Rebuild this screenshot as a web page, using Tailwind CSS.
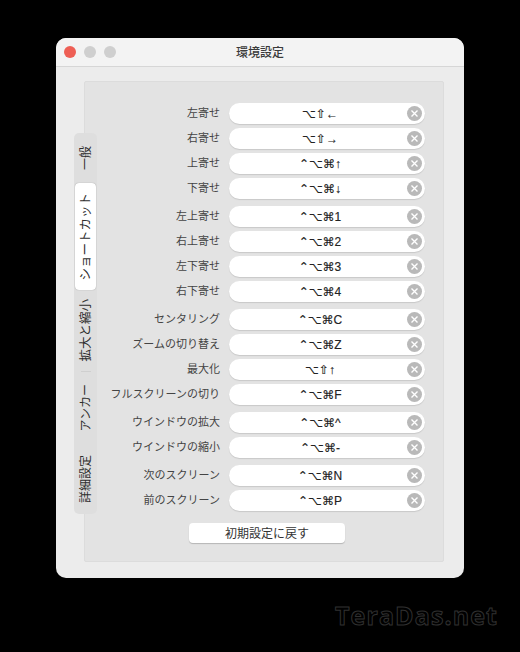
<!DOCTYPE html>
<html lang="ja">
  <head>
    <meta charset="utf-8" />
    <meta content="width=device-width, initial-scale=1.0" name="viewport" />
    <title>環境設定</title>
    <script src="https://cdn.jsdelivr.net/npm/@tailwindcss/browser@4"></script>
  </head>
  <body class="bg-black">
    <div class="relative w-[520px] h-[652px] overflow-hidden bg-black pt-[38px] pl-[56px] font-['Noto_Sans_CJK_JP','DejaVu_Sans',sans-serif]">
      <!-- window -->
      <div class="w-[408px] h-[540px] rounded-[10px] bg-[#ececec] overflow-hidden flex flex-col">
        <!-- title bar -->
        <div class="relative h-[29px] shrink-0 bg-[#f3f3f3] border-b border-[#d6d6d6] flex items-center justify-center">
          <div class="absolute left-[8px] top-[8px] flex gap-[8px]">
            <span class="w-[12px] h-[12px] rounded-full bg-[#ee5f55]"></span>
            <span class="w-[12px] h-[12px] rounded-full bg-[#cfcfcf]"></span>
            <span class="w-[12px] h-[12px] rounded-full bg-[#cfcfcf]"></span>
          </div>
          <span class="text-[12px] font-medium leading-none text-[#3a3a3a]">環境設定</span>
        </div>

        <!-- tab panel -->
        <div class="relative ml-[28px] mt-[14px] w-[360px] h-[481px] bg-[#e3e3e3] border border-[#dcdcdc] rounded-[2px] pt-[21px]">
          <!-- vertical tabs -->
          <div class="absolute left-[-11px] top-[51px] w-[23px] h-[381px] rounded-[5px] bg-[#dedede] flex flex-col items-center text-[12px] leading-none text-[#2e2e2e]">
            <div class="h-[50px] pr-px flex items-center justify-center"><span class="[writing-mode:vertical-rl] [text-orientation:sideways] rotate-180">一般</span></div>
            <div class="h-[107px] w-[21px] bg-white rounded-[4px] shadow-[0_0_1px_#00000066] flex items-center justify-center"><span class="[writing-mode:vertical-rl] [text-orientation:sideways] rotate-180 text-[12.5px]">ショートカット</span></div>
            <div class="h-[81px] pr-px flex items-center justify-center"><span class="[writing-mode:vertical-rl] [text-orientation:sideways] rotate-180 text-[12.5px]">拡大と縮小</span></div>
            <div class="w-[10px] h-px bg-[#cfcfcf]"></div>
            <div class="h-[72px] pr-px flex items-center justify-center"><span class="[writing-mode:vertical-rl] [text-orientation:sideways] rotate-180">アンカー</span></div>
            <div class="flex-1 pr-px flex items-center justify-center"><span class="[writing-mode:vertical-rl] [text-orientation:sideways] rotate-180">詳細設定</span></div>
          </div>

          <!-- shortcut rows -->
          <div class="flex flex-col gap-[7px] pl-[20px]">
            <div class="flex flex-col gap-[4px]">
              <div class="flex items-center gap-[9px] h-[21px]"><span class="w-[115px] pb-[2px] text-right text-[11px] leading-none text-[#444]">左寄せ</span><div class="relative w-[196px] h-[21px] pr-[14px] rounded-full bg-white shadow-[0_1px_1px_#0000001f] flex items-center justify-center font-['Liberation_Sans','DejaVu_Sans',sans-serif] text-[12px] leading-none text-[#222] [-webkit-text-stroke:0.15px_#222]">⌥⇧←<span class="absolute right-[3px] top-[3px] w-[15px] h-[15px] rounded-full bg-[#b9b9b9] flex items-center justify-center"><svg width="9" height="9" viewBox="0 0 9 9"><path d="M1.5 1.5l6 6M7.5 1.5l-6 6" stroke="#fff" stroke-width="1.4"/></svg></span></div></div>
              <div class="flex items-center gap-[9px] h-[21px]"><span class="w-[115px] pb-[2px] text-right text-[11px] leading-none text-[#444]">右寄せ</span><div class="relative w-[196px] h-[21px] pr-[14px] rounded-full bg-white shadow-[0_1px_1px_#0000001f] flex items-center justify-center font-['Liberation_Sans','DejaVu_Sans',sans-serif] text-[12px] leading-none text-[#222] [-webkit-text-stroke:0.15px_#222]">⌥⇧→<span class="absolute right-[3px] top-[3px] w-[15px] h-[15px] rounded-full bg-[#b9b9b9] flex items-center justify-center"><svg width="9" height="9" viewBox="0 0 9 9"><path d="M1.5 1.5l6 6M7.5 1.5l-6 6" stroke="#fff" stroke-width="1.4"/></svg></span></div></div>
              <div class="flex items-center gap-[9px] h-[21px]"><span class="w-[115px] pb-[2px] text-right text-[11px] leading-none text-[#444]">上寄せ</span><div class="relative w-[196px] h-[21px] pr-[14px] rounded-full bg-white shadow-[0_1px_1px_#0000001f] flex items-center justify-center font-['Liberation_Sans','DejaVu_Sans',sans-serif] text-[12px] leading-none text-[#222] [-webkit-text-stroke:0.15px_#222]">⌃⌥⌘↑<span class="absolute right-[3px] top-[3px] w-[15px] h-[15px] rounded-full bg-[#b9b9b9] flex items-center justify-center"><svg width="9" height="9" viewBox="0 0 9 9"><path d="M1.5 1.5l6 6M7.5 1.5l-6 6" stroke="#fff" stroke-width="1.4"/></svg></span></div></div>
              <div class="flex items-center gap-[9px] h-[21px]"><span class="w-[115px] pb-[2px] text-right text-[11px] leading-none text-[#444]">下寄せ</span><div class="relative w-[196px] h-[21px] pr-[14px] rounded-full bg-white shadow-[0_1px_1px_#0000001f] flex items-center justify-center font-['Liberation_Sans','DejaVu_Sans',sans-serif] text-[12px] leading-none text-[#222] [-webkit-text-stroke:0.15px_#222]">⌃⌥⌘↓<span class="absolute right-[3px] top-[3px] w-[15px] h-[15px] rounded-full bg-[#b9b9b9] flex items-center justify-center"><svg width="9" height="9" viewBox="0 0 9 9"><path d="M1.5 1.5l6 6M7.5 1.5l-6 6" stroke="#fff" stroke-width="1.4"/></svg></span></div></div>
            </div>
            <div class="flex flex-col gap-[4px]">
              <div class="flex items-center gap-[9px] h-[21px]"><span class="w-[115px] pb-[2px] text-right text-[11px] leading-none text-[#444]">左上寄せ</span><div class="relative w-[196px] h-[21px] pr-[14px] rounded-full bg-white shadow-[0_1px_1px_#0000001f] flex items-center justify-center font-['Liberation_Sans','DejaVu_Sans',sans-serif] text-[12px] leading-none text-[#222] [-webkit-text-stroke:0.15px_#222]">⌃⌥⌘1<span class="absolute right-[3px] top-[3px] w-[15px] h-[15px] rounded-full bg-[#b9b9b9] flex items-center justify-center"><svg width="9" height="9" viewBox="0 0 9 9"><path d="M1.5 1.5l6 6M7.5 1.5l-6 6" stroke="#fff" stroke-width="1.4"/></svg></span></div></div>
              <div class="flex items-center gap-[9px] h-[21px]"><span class="w-[115px] pb-[2px] text-right text-[11px] leading-none text-[#444]">右上寄せ</span><div class="relative w-[196px] h-[21px] pr-[14px] rounded-full bg-white shadow-[0_1px_1px_#0000001f] flex items-center justify-center font-['Liberation_Sans','DejaVu_Sans',sans-serif] text-[12px] leading-none text-[#222] [-webkit-text-stroke:0.15px_#222]">⌃⌥⌘2<span class="absolute right-[3px] top-[3px] w-[15px] h-[15px] rounded-full bg-[#b9b9b9] flex items-center justify-center"><svg width="9" height="9" viewBox="0 0 9 9"><path d="M1.5 1.5l6 6M7.5 1.5l-6 6" stroke="#fff" stroke-width="1.4"/></svg></span></div></div>
              <div class="flex items-center gap-[9px] h-[21px]"><span class="w-[115px] pb-[2px] text-right text-[11px] leading-none text-[#444]">左下寄せ</span><div class="relative w-[196px] h-[21px] pr-[14px] rounded-full bg-white shadow-[0_1px_1px_#0000001f] flex items-center justify-center font-['Liberation_Sans','DejaVu_Sans',sans-serif] text-[12px] leading-none text-[#222] [-webkit-text-stroke:0.15px_#222]">⌃⌥⌘3<span class="absolute right-[3px] top-[3px] w-[15px] h-[15px] rounded-full bg-[#b9b9b9] flex items-center justify-center"><svg width="9" height="9" viewBox="0 0 9 9"><path d="M1.5 1.5l6 6M7.5 1.5l-6 6" stroke="#fff" stroke-width="1.4"/></svg></span></div></div>
              <div class="flex items-center gap-[9px] h-[21px]"><span class="w-[115px] pb-[2px] text-right text-[11px] leading-none text-[#444]">右下寄せ</span><div class="relative w-[196px] h-[21px] pr-[14px] rounded-full bg-white shadow-[0_1px_1px_#0000001f] flex items-center justify-center font-['Liberation_Sans','DejaVu_Sans',sans-serif] text-[12px] leading-none text-[#222] [-webkit-text-stroke:0.15px_#222]">⌃⌥⌘4<span class="absolute right-[3px] top-[3px] w-[15px] h-[15px] rounded-full bg-[#b9b9b9] flex items-center justify-center"><svg width="9" height="9" viewBox="0 0 9 9"><path d="M1.5 1.5l6 6M7.5 1.5l-6 6" stroke="#fff" stroke-width="1.4"/></svg></span></div></div>
            </div>
            <div class="flex flex-col gap-[4px]">
              <div class="flex items-center gap-[9px] h-[21px]"><span class="w-[115px] pb-[2px] text-right text-[11px] leading-none text-[#444]">センタリング</span><div class="relative w-[196px] h-[21px] pr-[14px] rounded-full bg-white shadow-[0_1px_1px_#0000001f] flex items-center justify-center font-['Liberation_Sans','DejaVu_Sans',sans-serif] text-[12px] leading-none text-[#222] [-webkit-text-stroke:0.15px_#222]">⌃⌥⌘C<span class="absolute right-[3px] top-[3px] w-[15px] h-[15px] rounded-full bg-[#b9b9b9] flex items-center justify-center"><svg width="9" height="9" viewBox="0 0 9 9"><path d="M1.5 1.5l6 6M7.5 1.5l-6 6" stroke="#fff" stroke-width="1.4"/></svg></span></div></div>
              <div class="flex items-center gap-[9px] h-[21px]"><span class="w-[115px] pb-[2px] text-right text-[11px] leading-none text-[#444]">ズームの切り替え</span><div class="relative w-[196px] h-[21px] pr-[14px] rounded-full bg-white shadow-[0_1px_1px_#0000001f] flex items-center justify-center font-['Liberation_Sans','DejaVu_Sans',sans-serif] text-[12px] leading-none text-[#222] [-webkit-text-stroke:0.15px_#222]">⌃⌥⌘Z<span class="absolute right-[3px] top-[3px] w-[15px] h-[15px] rounded-full bg-[#b9b9b9] flex items-center justify-center"><svg width="9" height="9" viewBox="0 0 9 9"><path d="M1.5 1.5l6 6M7.5 1.5l-6 6" stroke="#fff" stroke-width="1.4"/></svg></span></div></div>
              <div class="flex items-center gap-[9px] h-[21px]"><span class="w-[115px] pb-[2px] text-right text-[11px] leading-none text-[#444]">最大化</span><div class="relative w-[196px] h-[21px] pr-[14px] rounded-full bg-white shadow-[0_1px_1px_#0000001f] flex items-center justify-center font-['Liberation_Sans','DejaVu_Sans',sans-serif] text-[12px] leading-none text-[#222] [-webkit-text-stroke:0.15px_#222]">⌥⇧↑<span class="absolute right-[3px] top-[3px] w-[15px] h-[15px] rounded-full bg-[#b9b9b9] flex items-center justify-center"><svg width="9" height="9" viewBox="0 0 9 9"><path d="M1.5 1.5l6 6M7.5 1.5l-6 6" stroke="#fff" stroke-width="1.4"/></svg></span></div></div>
              <div class="flex items-center gap-[9px] h-[21px]"><span class="w-[115px] pb-[2px] text-right text-[11px] leading-none text-[#444] whitespace-nowrap">フルスクリーンの切り</span><div class="relative w-[196px] h-[21px] pr-[14px] rounded-full bg-white shadow-[0_1px_1px_#0000001f] flex items-center justify-center font-['Liberation_Sans','DejaVu_Sans',sans-serif] text-[12px] leading-none text-[#222] [-webkit-text-stroke:0.15px_#222]">⌃⌥⌘F<span class="absolute right-[3px] top-[3px] w-[15px] h-[15px] rounded-full bg-[#b9b9b9] flex items-center justify-center"><svg width="9" height="9" viewBox="0 0 9 9"><path d="M1.5 1.5l6 6M7.5 1.5l-6 6" stroke="#fff" stroke-width="1.4"/></svg></span></div></div>
            </div>
            <div class="flex flex-col gap-[4px]">
              <div class="flex items-center gap-[9px] h-[21px]"><span class="w-[115px] pb-[2px] text-right text-[11px] leading-none text-[#444]">ウインドウの拡大</span><div class="relative w-[196px] h-[21px] pr-[14px] rounded-full bg-white shadow-[0_1px_1px_#0000001f] flex items-center justify-center font-['Liberation_Sans','DejaVu_Sans',sans-serif] text-[12px] leading-none text-[#222] [-webkit-text-stroke:0.15px_#222]">⌃⌥⌘^<span class="absolute right-[3px] top-[3px] w-[15px] h-[15px] rounded-full bg-[#b9b9b9] flex items-center justify-center"><svg width="9" height="9" viewBox="0 0 9 9"><path d="M1.5 1.5l6 6M7.5 1.5l-6 6" stroke="#fff" stroke-width="1.4"/></svg></span></div></div>
              <div class="flex items-center gap-[9px] h-[21px]"><span class="w-[115px] pb-[2px] text-right text-[11px] leading-none text-[#444]">ウインドウの縮小</span><div class="relative w-[196px] h-[21px] pr-[14px] rounded-full bg-white shadow-[0_1px_1px_#0000001f] flex items-center justify-center font-['Liberation_Sans','DejaVu_Sans',sans-serif] text-[12px] leading-none text-[#222] [-webkit-text-stroke:0.15px_#222]">⌃⌥⌘-<span class="absolute right-[3px] top-[3px] w-[15px] h-[15px] rounded-full bg-[#b9b9b9] flex items-center justify-center"><svg width="9" height="9" viewBox="0 0 9 9"><path d="M1.5 1.5l6 6M7.5 1.5l-6 6" stroke="#fff" stroke-width="1.4"/></svg></span></div></div>
            </div>
            <div class="flex flex-col gap-[4px]">
              <div class="flex items-center gap-[9px] h-[21px]"><span class="w-[115px] pb-[2px] text-right text-[11px] leading-none text-[#444]">次のスクリーン</span><div class="relative w-[196px] h-[21px] pr-[14px] rounded-full bg-white shadow-[0_1px_1px_#0000001f] flex items-center justify-center font-['Liberation_Sans','DejaVu_Sans',sans-serif] text-[12px] leading-none text-[#222] [-webkit-text-stroke:0.15px_#222]">⌃⌥⌘N<span class="absolute right-[3px] top-[3px] w-[15px] h-[15px] rounded-full bg-[#b9b9b9] flex items-center justify-center"><svg width="9" height="9" viewBox="0 0 9 9"><path d="M1.5 1.5l6 6M7.5 1.5l-6 6" stroke="#fff" stroke-width="1.4"/></svg></span></div></div>
              <div class="flex items-center gap-[9px] h-[21px]"><span class="w-[115px] pb-[2px] text-right text-[11px] leading-none text-[#444]">前のスクリーン</span><div class="relative w-[196px] h-[21px] pr-[14px] rounded-full bg-white shadow-[0_1px_1px_#0000001f] flex items-center justify-center font-['Liberation_Sans','DejaVu_Sans',sans-serif] text-[12px] leading-none text-[#222] [-webkit-text-stroke:0.15px_#222]">⌃⌥⌘P<span class="absolute right-[3px] top-[3px] w-[15px] h-[15px] rounded-full bg-[#b9b9b9] flex items-center justify-center"><svg width="9" height="9" viewBox="0 0 9 9"><path d="M1.5 1.5l6 6M7.5 1.5l-6 6" stroke="#fff" stroke-width="1.4"/></svg></span></div></div>
            </div>
          </div>

          <button class="block ml-[104px] mt-[12px] w-[156px] h-[20px] rounded-[4px] bg-white shadow-[0_1px_1px_#00000033] text-[12px] leading-none text-[#333]">初期設定に戻す</button>
        </div>
      </div>

      <!-- watermark -->
      <span class="absolute left-[335px] top-[603px] font-['Open_Sans',sans-serif] text-[25px] font-bold leading-none text-black tracking-[1.1px] [-webkit-text-stroke:1px_#303030]">TeraDas.net</span>
    </div>
  </body>
</html>
